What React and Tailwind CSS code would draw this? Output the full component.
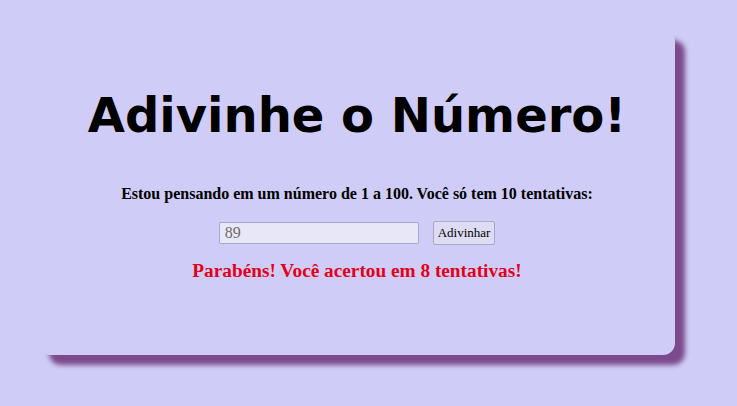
import { useState } from "react";

function App() {
    const [guess, setGuess] = useState("89");

    return (
        <div className="min-h-screen bg-[#cfcdf7] pt-[30px] pl-[39px]">
            <div className="w-[636px] h-[325px] bg-[#cfcdf7] rounded-[12px] shadow-[10px_10px_5px_#7b4a8c] pt-[57px] flex flex-col items-center">
                <h1 className="font-['DejaVu_Sans',sans-serif] font-bold text-[48px] leading-[56px] text-black">
                    Adivinhe o Número!
                </h1>
                <p className="mt-[42px] font-['Liberation_Serif',serif] font-bold text-[16px] leading-[18px] text-black">
                    Estou pensando em um número de 1 a 100. Você só tem 10 tentativas:
                </p>
                <div className="mt-[18px] flex items-center gap-[14px]">
                    <input
                        type="text"
                        value={guess}
                        onChange={(e) => setGuess(e.target.value)}
                        className="w-[200px] h-[22px] px-[5px] bg-[#e8e7f7] border border-[#a9a8cc] rounded-[2px] font-['Liberation_Serif',serif] text-[16px] text-[#6b6b6b] outline-none"
                    />
                    <button className="h-[24px] px-[4px] bg-[#dddcf2] border border-[#a9a8cc] rounded-[2px] font-['Liberation_Serif',serif] text-[13px] text-black">
                        Adivinhar
                    </button>
                </div>
                <p className="mt-[15px] font-['Liberation_Serif',serif] font-bold text-[19.3px] leading-[22px] text-[#e2001a]">
                    Parabéns! Você acertou em 8 tentativas!
                </p>
            </div>
        </div>
    );
}
export default App;
